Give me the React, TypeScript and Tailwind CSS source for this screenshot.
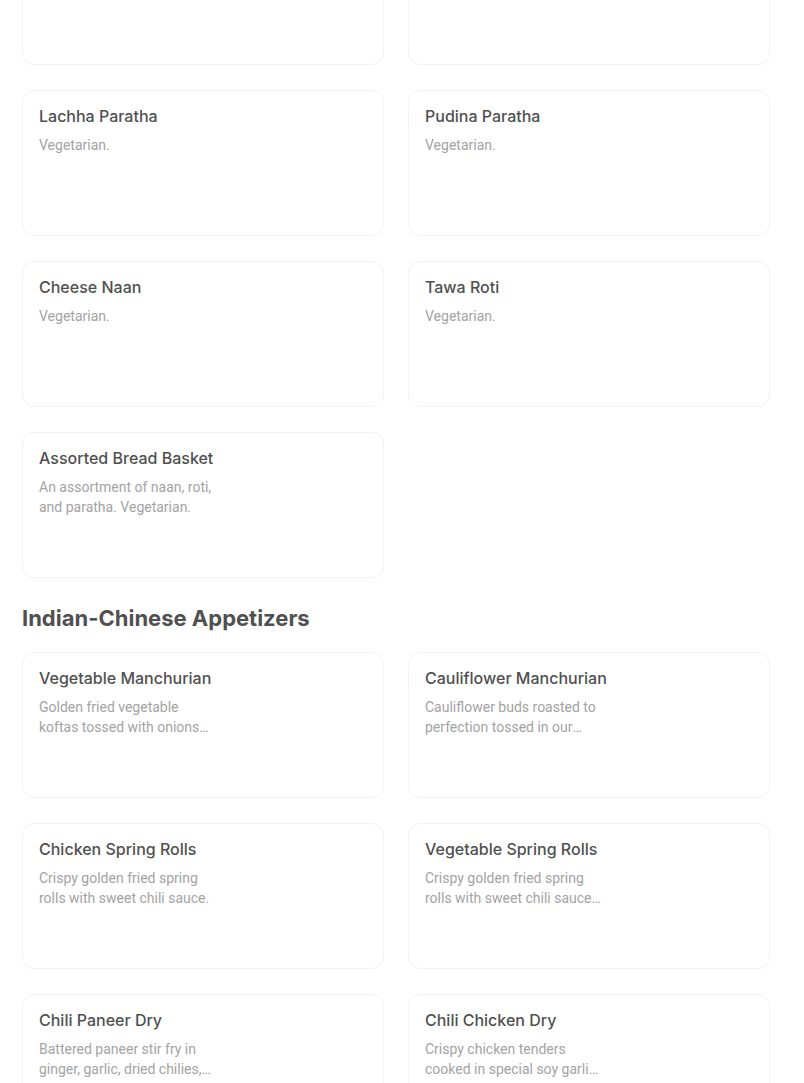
import React from "react";

// =============================================================================
// MENU SECTIONS - Breads & Indian-Chinese Appetizers
// =============================================================================

interface MenuItem {
  name: string;
  description: string;
}

const breads: MenuItem[] = [
  { name: "Garlic Naan", description: "Vegetarian." },
  { name: "Onion Kulcha", description: "Vegetarian." },
  { name: "Lachha Paratha", description: "Vegetarian." },
  { name: "Pudina Paratha", description: "Vegetarian." },
  { name: "Cheese Naan", description: "Vegetarian." },
  { name: "Tawa Roti", description: "Vegetarian." },
  {
    name: "Assorted Bread Basket",
    description: "An assortment of naan, roti, and paratha. Vegetarian.",
  },
];

const appetizers: MenuItem[] = [
  {
    name: "Vegetable Manchurian",
    description:
      "Golden fried vegetable koftas tossed with onions garlic and ginger in a tangy sauce.",
  },
  {
    name: "Cauliflower Manchurian",
    description:
      "Cauliflower buds roasted to perfection tossed in our special manchurian sauce.",
  },
  {
    name: "Chicken Spring Rolls",
    description: "Crispy golden fried spring rolls with sweet chili sauce.",
  },
  {
    name: "Vegetable Spring Rolls",
    description:
      "Crispy golden fried spring rolls with sweet chili sauce. Vegetarian.",
  },
  {
    name: "Chili Paneer Dry",
    description:
      "Battered paneer stir fry in ginger, garlic, dried chilies, and soy sauce.",
  },
  {
    name: "Chili Chicken Dry",
    description:
      "Crispy chicken tenders cooked in special soy garlic chili sauce.",
  },
];

const MenuCard: React.FC<{ item: MenuItem }> = ({ item }) => (
  <div className="h-[146px] rounded-xl border border-[#f3f3f3] bg-white px-4 pt-[13px]">
    <h3 className="text-base leading-6 font-medium text-[#505050] font-['Inter',sans-serif]">
      {item.name}
    </h3>
    <p className="mt-[7px] w-[179px] text-sm leading-5 text-[#a3a3a3] font-['Roboto',sans-serif] line-clamp-2">
      {item.description}
    </p>
  </div>
);

const MenuGrid: React.FC<{ items: MenuItem[] }> = ({ items }) => (
  <div className="grid grid-cols-2 gap-x-[24px] gap-y-[25px]">
    {items.map((item) => (
      <MenuCard key={item.name} item={item} />
    ))}
  </div>
);

export default function App() {
  return (
    <div className="min-h-screen bg-white overflow-hidden">
      <div className="w-[748px] ml-[22px] -mt-[81px] pb-10">
        {/* Breads */}
        <MenuGrid items={breads} />

        {/* Indian-Chinese Appetizers */}
        <h2 className="mt-[24px] mb-[18px] text-[22px] leading-8 font-bold text-[#505050] font-['Inter',sans-serif]">
          Indian-Chinese Appetizers
        </h2>
        <MenuGrid items={appetizers} />
      </div>
    </div>
  );
}
